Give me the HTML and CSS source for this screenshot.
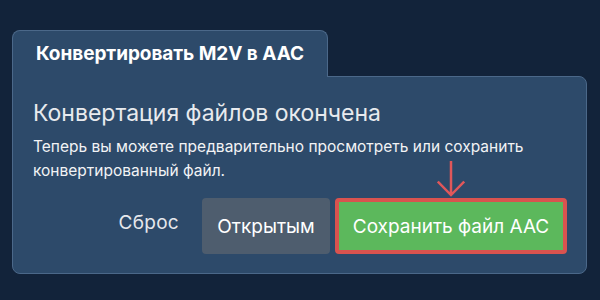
FILE: index.html
```html
<!DOCTYPE html>
<html lang="ru">
<head>
<meta charset="utf-8">
<link rel="stylesheet" href="styles.css">
</head>
<body>
<div class="wrap">
  <div class="tab">Конвертировать M2V в AAC</div>
  <div class="panel">
    <h2 class="heading">Конвертация файлов окончена</h2>
    <p class="desc">Теперь вы можете предварительно просмотреть или сохранить конвертированный файл.</p>
    <div class="actions">
      <span class="reset">Сброс</span>
      <span class="btn btn-open">Открытым</span>
      <span class="save-wrap">
        <svg class="arrow" width="28" height="37" viewBox="0 0 28 37"><path d="M14 0 V34 M0.8 20.5 L14 34 L27.2 20.5" fill="none" stroke="#e0575a" stroke-width="2.5"/></svg>
        <span class="btn btn-save">Сохранить файл AAC</span>
      </span>
    </div>
  </div>
</div>
</body>
</html>
```
FILE: styles.css
```css
html, body { margin: 0; padding: 0; }
body {
  background: #12233a;
  width: 600px;
  height: 300px;
  overflow: hidden;
  font-family: Inter, "Noto Sans", sans-serif;
  color: #fff;
}
.wrap {
  padding: 30px 0 0 12px;
  width: 575px;
}
.tab {
  position: relative;
  z-index: 1;
  width: 316px;
  height: 47px;
  box-sizing: border-box;
  padding: 0 0 0 23px;
  background: #2d4a6a;
  border: 1px solid #4b6889;
  border-bottom: none;
  border-radius: 8px 8px 0 0;
  margin-bottom: -1px;
  font-weight: 700;
  font-size: 19px;
  letter-spacing: -0.05px;
  line-height: 46px;
  white-space: nowrap;
}
.panel {
  background: #2d4a6a;
  border: 1px solid #4b6889;
  border-radius: 0 8px 8px 8px;
  box-sizing: border-box;
  padding: 21px 19px 19px 20px;
}
.heading {
  margin: 0;
  font-size: 23px;
  font-weight: 400;
  color: #e8eaee;
  line-height: 30px;
}
.desc {
  margin: 7px 0 0;
  font-size: 15.5px;
  line-height: 24px;
  color: #f2f3f5;
}
.actions {
  display: flex;
  justify-content: flex-end;
  align-items: flex-end;
  margin-top: -22px;
}
.reset {
  font-size: 19px;
  color: #e6e8ec;
  margin-right: 23px;
  line-height: 56px;
  padding-bottom: 3px;
  letter-spacing: 0.3px;
}
.btn {
  display: inline-flex;
  align-items: center;
  justify-content: center;
  height: 56px;
  box-sizing: border-box;
  font-size: 19px;
  border-radius: 4px;
  color: #fff;
}
.btn-open {
  background: #4e5d6e;
  width: 128px;
}
.save-wrap {
  display: flex;
  flex-direction: column;
  align-items: center;
  margin-left: 5px;
}
.arrow { display: block; }
.btn-save {
  background: #5cb85c;
  border: 4px solid #d9534f;
  width: 232px;
}
```
